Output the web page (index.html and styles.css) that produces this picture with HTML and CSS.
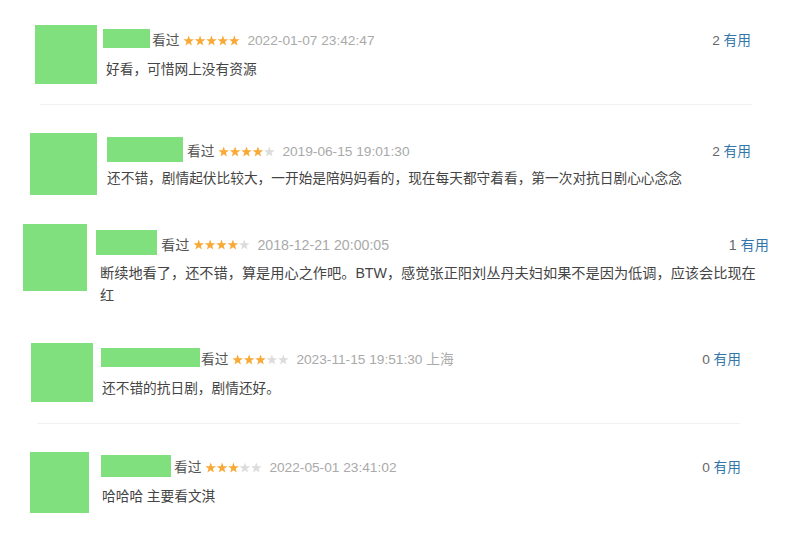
FILE: index.html
```html
<!DOCTYPE html>
<html lang="zh-CN">
<head>
  <meta charset="UTF-8">
  <meta name="viewport" content="width=device-width, initial-scale=1.0">
  <title>短评</title>
  <link rel="stylesheet" href="styles.css">
</head>
<body>
  <svg class="defs" aria-hidden="true">
    <symbol id="star" viewBox="0 0 12 12">
      <polygon points="6,0.5 7.41,4.36 11.52,4.51 8.28,7.04 9.41,10.99 6,8.7 2.59,10.99 3.72,7.04 0.48,4.51 4.59,4.36"/>
    </symbol>
  </svg>

  <main class="list">
    <div class="review r1">
      <div class="avatar"></div>
      <div class="body">
        <div class="meta">
          <span class="name"></span>
          <span class="seen">看过</span>
          <svg class="stars" viewBox="0 0 57 12">
            <use href="#star" class="on" x="0" width="11.4" height="11.4"/>
            <use href="#star" class="on" x="11.4" width="11.4" height="11.4"/>
            <use href="#star" class="on" x="22.8" width="11.4" height="11.4"/>
            <use href="#star" class="on" x="34.2" width="11.4" height="11.4"/>
            <use href="#star" class="on" x="45.6" width="11.4" height="11.4"/>
          </svg>
          <span class="date">2022-01-07 23:42:47</span>
          <span class="votes"><span class="count">2</span> <a href="#">有用</a></span>
        </div>
        <p class="text">好看，可惜网上没有资源</p>
      </div>
    </div>

    <div class="divider d1"></div>

    <div class="review r2">
      <div class="avatar"></div>
      <div class="body">
        <div class="meta">
          <span class="name"></span>
          <span class="seen">看过</span>
          <svg class="stars" viewBox="0 0 57 12">
            <use href="#star" class="on" x="0" width="11.4" height="11.4"/>
            <use href="#star" class="on" x="11.4" width="11.4" height="11.4"/>
            <use href="#star" class="on" x="22.8" width="11.4" height="11.4"/>
            <use href="#star" class="on" x="34.2" width="11.4" height="11.4"/>
            <use href="#star" class="off" x="45.6" width="11.4" height="11.4"/>
          </svg>
          <span class="date">2019-06-15 19:01:30</span>
          <span class="votes"><span class="count">2</span> <a href="#">有用</a></span>
        </div>
        <p class="text">还不错，剧情起伏比较大，一开始是陪妈妈看的，现在每天都守着看，第一次对抗日剧心心念念</p>
      </div>
    </div>

    <div class="review r3">
      <div class="avatar"></div>
      <div class="body">
        <div class="meta">
          <span class="name"></span>
          <span class="seen">看过</span>
          <svg class="stars" viewBox="0 0 57 12">
            <use href="#star" class="on" x="0" width="11.4" height="11.4"/>
            <use href="#star" class="on" x="11.4" width="11.4" height="11.4"/>
            <use href="#star" class="on" x="22.8" width="11.4" height="11.4"/>
            <use href="#star" class="on" x="34.2" width="11.4" height="11.4"/>
            <use href="#star" class="off" x="45.6" width="11.4" height="11.4"/>
          </svg>
          <span class="date">2018-12-21 20:00:05</span>
          <span class="votes"><span class="count">1</span> <a href="#">有用</a></span>
        </div>
        <p class="text">断续地看了，还不错，算是用心之作吧。BTW，感觉张正阳刘丛丹夫妇如果不是因为低调，应该会比现在红</p>
      </div>
    </div>

    <div class="review r4">
      <div class="avatar"></div>
      <div class="body">
        <div class="meta">
          <span class="name"></span>
          <span class="seen">看过</span>
          <svg class="stars" viewBox="0 0 57 12">
            <use href="#star" class="on" x="0" width="11.4" height="11.4"/>
            <use href="#star" class="on" x="11.4" width="11.4" height="11.4"/>
            <use href="#star" class="on" x="22.8" width="11.4" height="11.4"/>
            <use href="#star" class="off" x="34.2" width="11.4" height="11.4"/>
            <use href="#star" class="off" x="45.6" width="11.4" height="11.4"/>
          </svg>
          <span class="date">2023-11-15 19:51:30 上海</span>
          <span class="votes"><span class="count">0</span> <a href="#">有用</a></span>
        </div>
        <p class="text">还不错的抗日剧，剧情还好。</p>
      </div>
    </div>

    <div class="divider d2"></div>

    <div class="review r5">
      <div class="avatar"></div>
      <div class="body">
        <div class="meta">
          <span class="name"></span>
          <span class="seen">看过</span>
          <svg class="stars" viewBox="0 0 57 12">
            <use href="#star" class="on" x="0" width="11.4" height="11.4"/>
            <use href="#star" class="on" x="11.4" width="11.4" height="11.4"/>
            <use href="#star" class="on" x="22.8" width="11.4" height="11.4"/>
            <use href="#star" class="off" x="34.2" width="11.4" height="11.4"/>
            <use href="#star" class="off" x="45.6" width="11.4" height="11.4"/>
          </svg>
          <span class="date">2022-05-01 23:41:02</span>
          <span class="votes"><span class="count">0</span> <a href="#">有用</a></span>
        </div>
        <p class="text">哈哈哈 主要看文淇</p>
      </div>
    </div>
  </main>
</body>
</html>
```

FILE: styles.css
```css
body {
  margin: 0;
  background: #fff;
  font-family: "Liberation Sans", "Noto Sans CJK SC", sans-serif;
  font-size: 13.7px;
  color: #444;
}
.defs {
  display: block;
  width: 0;
  height: 0;
  overflow: hidden;
}
.list {
  display: flex;
  flex-direction: column;
}
.review {
  display: flex;
  align-items: flex-start;
}
.avatar {
  flex: none;
  background: #80e07e;
}
.body {
  flex: none;
  display: flex;
  flex-direction: column;
}
.meta {
  display: flex;
  align-items: center;
  line-height: 20px;
  white-space: nowrap;
}
.name {
  flex: none;
  margin-bottom: 4px;
  background: #80e07e;
}
.seen {
  color: #555;
}
.stars {
  flex: none;
  width: 57px;
  height: 12px;
  margin: 0 7px 0 4px;
}
.stars .on { fill: #f8a936; }
.stars .off { fill: #dcdcdc; }
.date {
  color: #aaa;
}
.votes {
  margin-left: auto;
  color: #666;
}
.votes a {
  color: #37a;
  text-decoration: none;
}
.text {
  margin: 0;
  line-height: 22px;
}
.divider {
  height: 1px;
  background: #f1f1f1;
}

/* each snippet sits a little differently */
.r1 { margin: 25px 0 0 35px; }
.r1 .avatar { width: 62px; height: 59px; }
.r1 .body { margin-left: 6px; padding-top: 4px; width: 648px; }
.r1 .name { width: 47px; height: 19px; margin-right: 2px; }
.r1 .text { margin-top: 7px; padding-left: 3px; }

.d1 { margin: 20px 0 0 40px; width: 712px; }

.r2 { margin: 28px 0 0 30px; }
.r2 .avatar { width: 67px; height: 62px; }
.r2 .body { margin-left: 10px; padding-top: 4px; width: 644px; }
.r2 .name { width: 76px; height: 25px; margin-right: 4px; }
.r2 .text { margin-top: 2px; }

.r3 { margin: 29px 0 0 23px; font-size: 14.2px; }
.r3 .avatar { width: 64px; height: 67px; }
.r3 .body { margin-left: 9px; padding-top: 6px; width: 673px; }
.r3 .name { width: 61px; height: 25px; margin-right: 4px; }
.r3 .text { margin-top: 3px; padding: 0 6px 0 4px; }

.r4 { margin: 37px 0 0 31px; }
.r4 .avatar { width: 62px; height: 59px; }
.r4 .body { margin-left: 8px; padding-top: 5px; width: 640px; }
.r4 .name { width: 99px; height: 19px; margin-right: 1px; }
.r4 .text { margin-top: 7px; padding-left: 1px; }

.d2 { margin: 21px 0 0 37px; width: 703px; }

.r5 { margin: 28px 0 0 30px; }
.r5 .avatar { width: 59px; height: 61px; }
.r5 .body { margin-left: 12px; padding-top: 3px; width: 640px; }
.r5 .name { width: 70px; height: 22px; margin-right: 3px; }
.r5 .text { margin-top: 5px; padding-left: 1px; }
```
